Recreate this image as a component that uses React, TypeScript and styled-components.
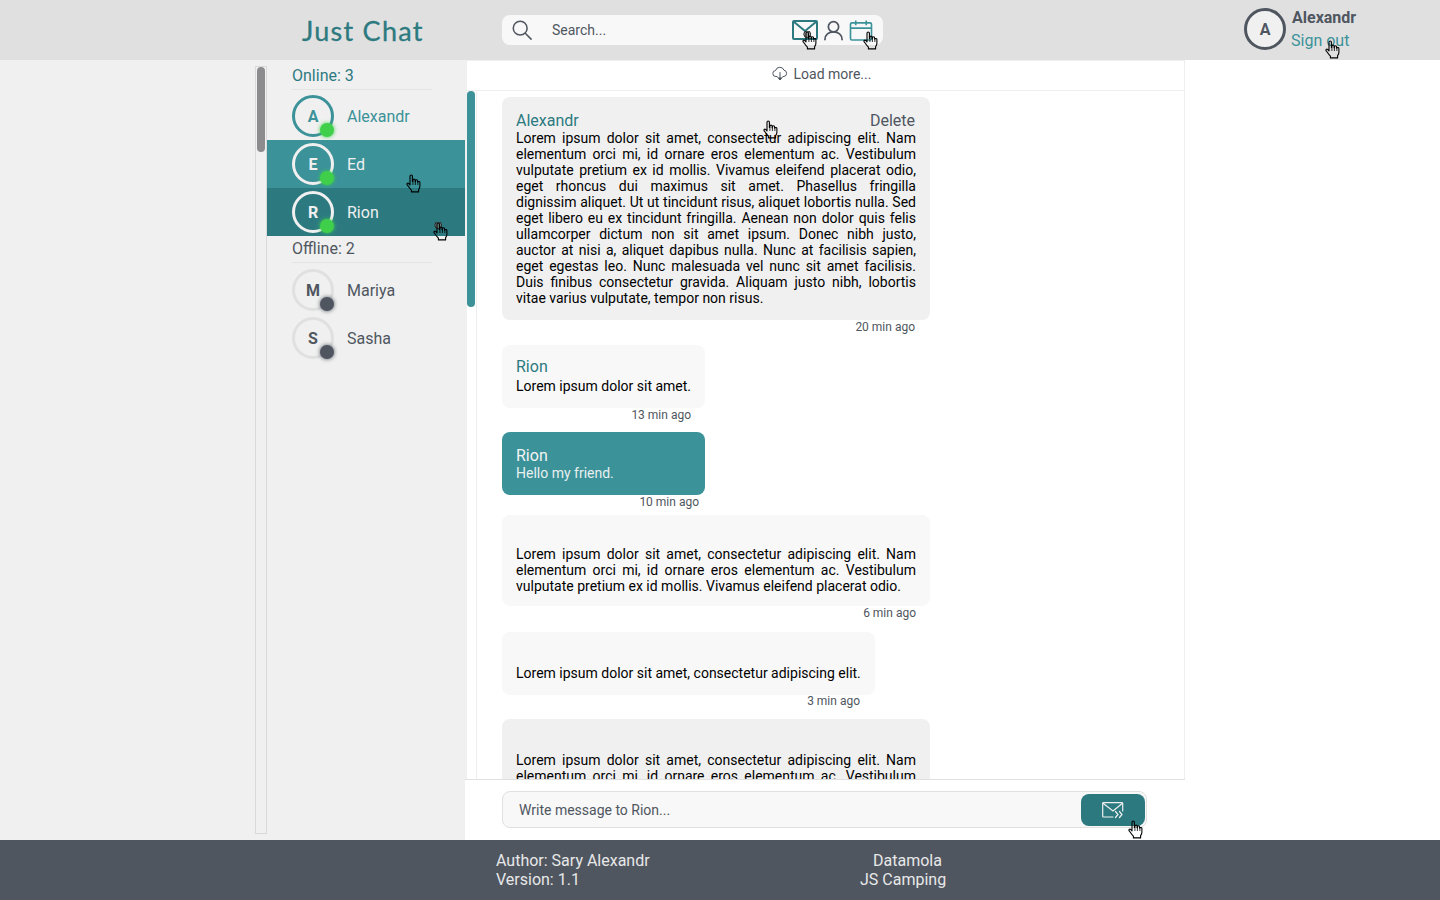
import React from 'react';
import styled, { createGlobalStyle } from 'styled-components';

const TEAL = '#3b9299';
const TEAL_DARK = '#2c7a80';
const SLATE = '#4f5660';

const LOREM_LONG =
  'Lorem ipsum dolor sit amet, consectetur adipiscing elit. Nam elementum orci mi, id ornare eros elementum ac. Vestibulum vulputate pretium ex id mollis. Vivamus eleifend placerat odio, eget rhoncus dui maximus sit amet. Phasellus fringilla dignissim aliquet. Ut ut tincidunt risus, aliquet lobortis nulla. Sed eget libero eu ex tincidunt fringilla. Aenean non dolor quis felis ullamcorper dictum non sit amet ipsum. Donec nibh justo, auctor at nisi a, aliquet dapibus nulla. Nunc at facilisis sapien, eget egestas leo. Nunc malesuada vel nunc sit amet facilisis. Duis finibus consectetur gravida. Aliquam justo nibh, lobortis vitae varius vulputate, tempor non risus.';
const LOREM_MID =
  'Lorem ipsum dolor sit amet, consectetur adipiscing elit. Nam elementum orci mi, id ornare eros elementum ac. Vestibulum vulputate pretium ex id mollis. Vivamus eleifend placerat odio.';

const GlobalStyle = createGlobalStyle`
  html, body {
    margin: 0;
    padding: 0;
    background: #fff;
  }
  * {
    box-sizing: border-box;
  }
  body {
    font-family: Roboto, 'Liberation Sans', sans-serif;
  }
`;

const Page = styled.div`
  position: relative;
  width: 1440px;
  height: 900px;
  overflow: hidden;
  display: flex;
  flex-direction: column;
`;

const Header = styled.header`
  height: 60px;
  flex: none;
  background: #e0e0e0;
  display: flex;
  align-items: center;
  padding-left: 302px;
`;

const Logo = styled.div`
  width: 200px;
  font-family: Lato, sans-serif;
  font-size: 27px;
  letter-spacing: 1.25px;
  color: ${TEAL_DARK};
  -webkit-text-stroke: 0.3px ${TEAL_DARK};
`;

const SearchBox = styled.div`
  width: 381px;
  height: 30px;
  border-radius: 8px;
  background: #f8f8f8;
  display: flex;
  align-items: center;
  padding-left: 10px;
  color: ${SLATE};
  font-size: 14px;
`;

const SearchText = styled.span`
  margin-left: 20px;
  width: 240px;
`;

const NavIcons = styled.div`
  display: flex;
  align-items: center;
  gap: 6px;
`;

const UserArea = styled.div`
  margin-left: 361px;
  align-self: flex-start;
  margin-top: 8px;
  display: flex;
  gap: 6px;
`;

const HeaderAvatar = styled.div`
  width: 42px;
  height: 42px;
  border-radius: 50%;
  border: 3px solid ${SLATE};
  background: #f0f0f0;
  color: ${SLATE};
  font-weight: 700;
  font-size: 16px;
  display: flex;
  align-items: center;
  justify-content: center;
`;

const UserText = styled.div`
  display: flex;
  flex-direction: column;
  font-size: 16px;
  line-height: 19px;
  gap: 4px;
`;

const UserName = styled.span`
  font-weight: 700;
  color: ${SLATE};
`;

const SignOut = styled.span`
  color: ${TEAL};
  margin-left: -1px;
`;

const Main = styled.main`
  flex: 1;
  display: flex;
  min-height: 0;
`;

const Gutter = styled.div`
  width: 267px;
  flex: none;
  padding: 6px 0 6px 255px;
  background: #f0f0f0;
`;

const ScrollTrack = styled.div`
  height: 100%;
  border: 1px solid #d9d9d9;
  padding: 0 1px;
`;

const ScrollThumb = styled.div<{ $color: string; $height: number }>`
  height: ${(p) => p.$height}px;
  border-radius: 5px;
  background: ${(p) => p.$color};
`;

const Sidebar = styled.aside`
  width: 200px;
  flex: none;
  background: #f0f0f0;
  padding-right: 2px;
`;

const GroupTitle = styled.div<{ $online?: boolean }>`
  margin: 0 33px 0 25px;
  height: ${(p) => (p.$online ? 30 : 27)}px;
  padding-top: ${(p) => (p.$online ? 6 : 3)}px;
  font-size: 16px;
  line-height: 19px;
  color: ${(p) => (p.$online ? TEAL_DARK : SLATE)};
  border-bottom: 1px solid #e4e4e4;
  margin-bottom: ${(p) => (p.$online ? 2 : 3)}px;
`;

const UserRow = styled.div<{ $bg?: string; $color: string }>`
  height: 48px;
  display: flex;
  align-items: center;
  padding-left: 25px;
  background: ${(p) => p.$bg || 'transparent'};
  color: ${(p) => p.$color};
  font-size: 16px;
`;

const Avatar = styled.div<{ $ring: string; $color: string }>`
  position: relative;
  width: 42px;
  height: 42px;
  margin-right: 13px;
  border-radius: 50%;
  border: 3px solid ${(p) => p.$ring};
  color: ${(p) => p.$color};
  font-weight: 700;
  font-size: 16px;
  display: flex;
  align-items: center;
  justify-content: center;
`;

const StatusDot = styled.span<{ $online: boolean }>`
  position: absolute;
  right: -3px;
  bottom: -3px;
  width: 14px;
  height: 14px;
  border-radius: 50%;
  background: ${(p) => (p.$online ? '#3fcf4b' : SLATE)};
  box-shadow: 0 0 4px ${(p) => (p.$online ? '#3fcf4b' : SLATE)};
`;

const Chat = styled.section`
  width: 718px;
  flex: none;
  display: flex;
  flex-direction: column;
  border-right: 1px solid #eeeeee;
`;

const LoadMore = styled.div`
  height: 31px;
  flex: none;
  border-top: 1px solid #f0f0f0;
  border-bottom: 1px solid #eeeeee;
  display: flex;
  align-items: center;
  justify-content: center;
  gap: 6px;
  padding: 0 8px 4px 0;
  font-size: 14px;
  color: ${SLATE};
`;

const ChatBody = styled.div`
  flex: 1;
  min-height: 0;
  display: flex;
  overflow: hidden;
`;

const ChatScroll = styled.div`
  width: 10px;
  flex: none;
  padding-right: 2px;
`;

const MessageList = styled.div`
  flex: 1;
  padding: 6px 0 0 25px;
  border-left: 1px solid #eeeeee;
  margin-left: -1px;
  overflow: hidden;
`;

const Message = styled.div<{ $width: number; $after: number }>`
  width: ${(p) => p.$width}px;
  margin-bottom: ${(p) => p.$after}px;
`;

const Bubble = styled.div<{ $tone?: 'own' | 'light'; $bottom?: number }>`
  padding: 14px 14px ${(p) => p.$bottom ?? 14}px;
  border-radius: 8px;
  background: ${(p) => (p.$tone === 'own' ? TEAL : p.$tone === 'light' ? '#f8f8f8' : '#f0f0f0')};
`;

const BubbleHead = styled.div<{ $height: number; $line?: number }>`
  height: ${(p) => p.$height}px;
  line-height: ${(p) => p.$line ?? 19}px;
  display: flex;
  justify-content: space-between;
  font-size: 16px;
`;

const Author = styled.span<{ $own?: boolean }>`
  color: ${(p) => (p.$own ? '#f4f4f4' : TEAL_DARK)};
`;

const DeleteLink = styled.span`
  color: ${SLATE};
  margin-right: 1px;
`;

const BubbleText = styled.div<{ $own?: boolean; $single?: boolean }>`
  font-size: 14px;
  line-height: 16px;
  text-align: ${(p) => (p.$single ? 'left' : 'justify')};
  white-space: ${(p) => (p.$single ? 'nowrap' : 'normal')};
  color: ${(p) => (p.$own ? '#e8f0f0' : '#000')};
`;

const TimeLabel = styled.div<{ $inset: number; $lift?: number }>`
  text-align: right;
  font-size: 12px;
  line-height: 14px;
  color: ${SLATE};
  padding-right: ${(p) => p.$inset}px;
  margin-top: ${(p) => -(p.$lift ?? 0)}px;
`;

const Composer = styled.div`
  height: 61px;
  flex: none;
  margin-left: -2px;
  border-top: 1px solid #e0e0e0;
  background: #fff;
  padding: 11px 0 0 37px;
  width: 720px;
`;

const ComposerField = styled.div`
  width: 645px;
  height: 37px;
  border: 1px solid #e0e0e0;
  border-radius: 8px;
  background: #f8f8f8;
  display: flex;
  align-items: center;
  justify-content: space-between;
  padding: 0 1px 0 16px;
  font-size: 14px;
  color: ${SLATE};
`;

const SendButton = styled.div`
  width: 64px;
  height: 32px;
  border-radius: 8px;
  background: ${TEAL_DARK};
  display: flex;
  align-items: center;
  justify-content: center;
  padding-top: 1px;
`;

const RightSpace = styled.div`
  flex: 1;
  background: #fff;
`;

const Footer = styled.footer`
  height: 60px;
  flex: none;
  background: ${SLATE};
  color: #e8e8e8;
  font-size: 16px;
  line-height: 19px;
  display: flex;
  padding: 11px 0 0 496px;
`;

const FooterLeft = styled.div`
  width: 364px;
`;

const FooterIndented = styled.div`
  padding-left: 13px;
`;

const Cursor = styled.svg<{ $x: number; $y: number }>`
  position: absolute;
  left: ${(p) => p.$x}px;
  top: ${(p) => p.$y}px;
  width: 15px;
  height: 19px;
`;

// the pointer is only an outline in the screenshot, the background shows through
const Hand = ({ x, y, press }: { x: number; y: number; press?: boolean }) => (
  <Cursor $x={x} $y={y} viewBox="0 0 15 19">
    {press && <circle cx="5.2" cy="3.2" r="3.4" fill="#888" fillOpacity="0.7" stroke="#222" strokeWidth="1" />}
    <path
      d="M4 2.2a1.2 1.2 0 0 1 2.4 0V7.5h.5V6.2a1.1 1.1 0 0 1 2.2 0v1.5h.3V6.9a1.1 1.1 0 0 1 2.2 0v1.3h.2a1.1 1.1 0 0 1 2.1.6v3.4c0 1.6-.6 2.6-1.3 3.5v2.2H5.4v-1.7C4 14.8 2.4 12.4 1.1 10.6c-.6-.9.6-2 1.5-1.2L4 10.8Z"
      fill="none"
      stroke="#000"
      strokeWidth="1.1"
      strokeLinejoin="round"
    />
    <path d="M6.9 8v3M9.4 8v3M11.9 8.5V11" stroke="#000" strokeWidth="0.8" />
  </Cursor>
);

const SearchIcon = () => (
  <svg width="20" height="20" viewBox="0 0 22 22" fill="none" stroke={SLATE} strokeWidth="1.7" strokeLinecap="round">
    <circle cx="9" cy="9" r="7.6" />
    <path d="M14.6 14.6 21 21" />
  </svg>
);

const MailIcon = () => (
  <svg width="26" height="20" viewBox="0 0 26 20" fill="none" stroke={TEAL_DARK} strokeWidth="2" strokeLinejoin="round">
    <rect x="1" y="1" width="24" height="18" rx="1" />
    <path d="M1.5 1.5 13 11 24.5 1.5" />
  </svg>
);

const PersonIcon = () => (
  <svg width="19" height="21" viewBox="0 0 20 21" fill="none" stroke={SLATE} strokeWidth="1.8" strokeLinecap="round">
    <circle cx="10" cy="6.5" r="5.4" />
    <path d="M1 20c0-5 4-8 9-8s9 3 9 8" />
  </svg>
);

const CalendarIcon = () => (
  <svg width="24" height="21" viewBox="0 0 24 22" fill="none" stroke={TEAL} strokeWidth="1.7">
    <rect x="1" y="3" width="22" height="18" rx="1.5" />
    <path d="M1 8.5h22M6.5 0.5v5M17.5 0.5v5" />
  </svg>
);

const CloudIcon = () => (
  <svg width="16" height="15" viewBox="0 0 16 15" fill="none" stroke={SLATE} strokeWidth="1" strokeLinecap="round" strokeLinejoin="round">
    <path d="M5 10.5H4a3 3 0 0 1-.4-6A4.4 4.4 0 0 1 12 4.2a3.2 3.2 0 0 1 0 6.3h-1" />
    <path d="M8 6.5v7" />
    <path d="M5.8 11.5 8 14l2.2-2.5" fill={SLATE} />
  </svg>
);

const SendIcon = () => (
  <svg width="22" height="17" viewBox="0 0 22 17" fill="none" stroke="#f0f0f0" strokeWidth="1.2" strokeLinecap="round">
    <path d="M11 15H1.5a.8.8 0 0 1-.8-.8V1.5A.8.8 0 0 1 1.5.7h18.4a.8.8 0 0 1 .8.8V9" />
    <path d="M1 1.2 11 9 20.5 1.2" />
    <path d="M13.5 9.5 16 12.5 13.5 15.5M17.5 9.5 20 12.5 17.5 15.5" />
  </svg>
);

type Person = { name: string; online: boolean; bg?: string };

const people: Person[] = [
  { name: 'Alexandr', online: true },
  { name: 'Ed', online: true, bg: TEAL },
  { name: 'Rion', online: true, bg: TEAL_DARK },
  { name: 'Mariya', online: false },
  { name: 'Sasha', online: false },
];

const PersonRow = ({ person }: { person: Person }) => {
  const highlighted = Boolean(person.bg);
  const textColor = highlighted ? '#f0f0f0' : person.online ? TEAL : SLATE;
  const ring = highlighted ? '#f0f0f0' : person.online ? TEAL : '#e0e0e0';
  return (
    <UserRow $bg={person.bg} $color={textColor}>
      <Avatar $ring={ring} $color={textColor}>
        {person.name[0]}
        <StatusDot $online={person.online} />
      </Avatar>
      {person.name}
    </UserRow>
  );
};

export default function App() {
  return (
    <Page>
      <GlobalStyle />
      <Header>
        <Logo>Just Chat</Logo>
        <SearchBox>
          <SearchIcon />
          <SearchText>Search...</SearchText>
          <NavIcons>
            <MailIcon />
            <PersonIcon />
            <CalendarIcon />
          </NavIcons>
        </SearchBox>
        <UserArea>
          <HeaderAvatar>A</HeaderAvatar>
          <UserText>
            <UserName>Alexandr</UserName>
            <SignOut>Sign out</SignOut>
          </UserText>
        </UserArea>
      </Header>

      <Main>
        <Gutter>
          <ScrollTrack>
            <ScrollThumb $color="#8c8c8f" $height={85} />
          </ScrollTrack>
        </Gutter>
        <Sidebar>
          <GroupTitle $online>Online: 3</GroupTitle>
          {people.filter((p) => p.online).map((p) => <PersonRow key={p.name} person={p} />)}
          <GroupTitle>Offline: 2</GroupTitle>
          {people.filter((p) => !p.online).map((p) => <PersonRow key={p.name} person={p} />)}
        </Sidebar>
        <Chat>
          <LoadMore>
            <CloudIcon />
            Load more...
          </LoadMore>
          <ChatBody>
            <ChatScroll>
              <ScrollThumb $color={TEAL} $height={216} />
            </ChatScroll>
            <MessageList>
              <Message $width={428} $after={11}>
                <Bubble>
                  <BubbleHead $height={19}>
                    <Author>Alexandr</Author>
                    <DeleteLink>Delete</DeleteLink>
                  </BubbleHead>
                  <BubbleText>{LOREM_LONG}</BubbleText>
                </Bubble>
                <TimeLabel $inset={15}>20 min ago</TimeLabel>
              </Message>
              <Message $width={203} $after={10}>
                <Bubble $tone="light">
                  <BubbleHead $height={19} $line={16}>
                    <Author>Rion</Author>
                  </BubbleHead>
                  <BubbleText $single>Lorem ipsum dolor sit amet.</BubbleText>
                </Bubble>
                <TimeLabel $inset={14}>13 min ago</TimeLabel>
              </Message>
              <Message $width={203} $after={6}>
                <Bubble $tone="own">
                  <BubbleHead $height={19}>
                    <Author $own>Rion</Author>
                  </BubbleHead>
                  <BubbleText $own $single>Hello my friend.</BubbleText>
                </Bubble>
                <TimeLabel $inset={6}>10 min ago</TimeLabel>
              </Message>
              <Message $width={428} $after={12}>
                <Bubble $tone="light" $bottom={12}>
                  <BubbleHead $height={17} />
                  <BubbleText>{LOREM_MID}</BubbleText>
                </Bubble>
                <TimeLabel $inset={14}>6 min ago</TimeLabel>
              </Message>
              <Message $width={373} $after={11}>
                <Bubble $tone="light">
                  <BubbleHead $height={19} />
                  <BubbleText $single>Lorem ipsum dolor sit amet, consectetur adipiscing elit.</BubbleText>
                </Bubble>
                <TimeLabel $inset={15} $lift={1}>3 min ago</TimeLabel>
              </Message>
              <Message $width={428} $after={0}>
                <Bubble>
                  <BubbleHead $height={19} />
                  <BubbleText>{LOREM_MID}</BubbleText>
                </Bubble>
              </Message>
            </MessageList>
          </ChatBody>
          <Composer>
            <ComposerField>
              Write message to Rion...
              <SendButton>
                <SendIcon />
              </SendButton>
            </ComposerField>
          </Composer>
        </Chat>
        <RightSpace />
      </Main>

      <Footer>
        <FooterLeft>
          <div>Author: Sary Alexandr</div>
          <div>Version: 1.1</div>
        </FooterLeft>
        <div>
          <FooterIndented>Datamola</FooterIndented>
          <div>JS Camping</div>
        </div>
      </Footer>

      <Hand x={802} y={31} press />
      <Hand x={863} y={31} />
      <Hand x={1325} y={40} />
      <Hand x={406} y={174} />
      <Hand x={433} y={222} press />
      <Hand x={763} y={120} />
      <Hand x={1128} y={820} />
    </Page>
  );
}
